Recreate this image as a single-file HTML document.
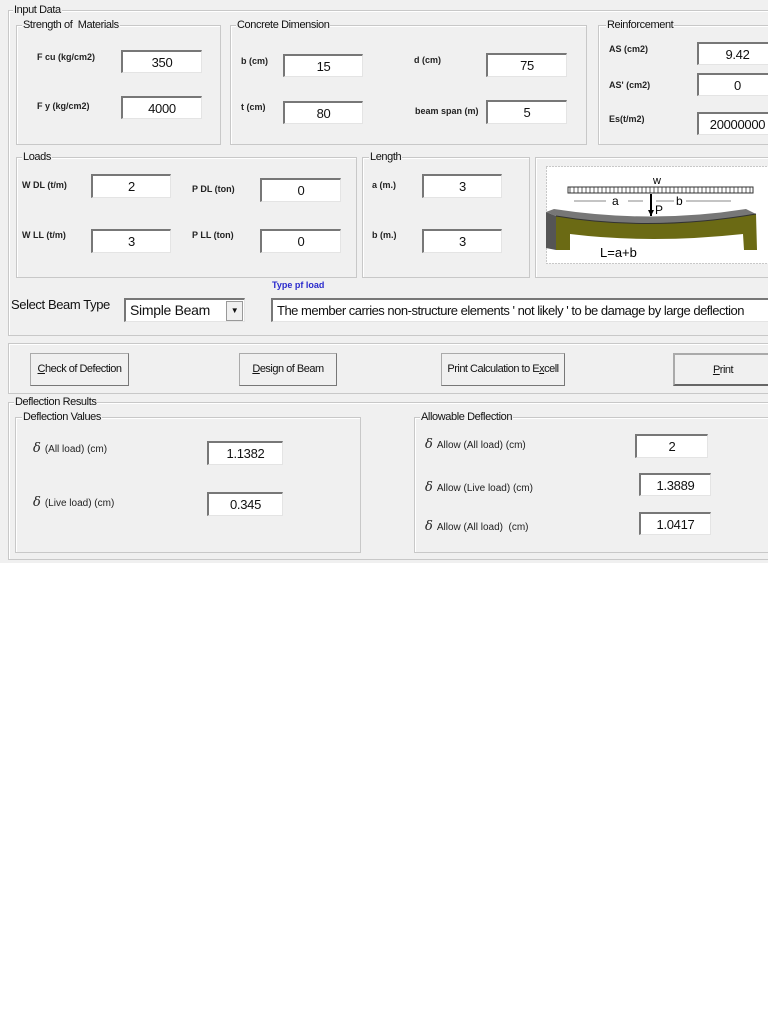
<!DOCTYPE html>
<html><head><style>
body{margin:0;width:768px;height:1024px;background:#fff;position:relative;overflow:hidden;font-family:"Liberation Sans",Arial,sans-serif;}
.bg{position:absolute;left:0;top:0;width:768px;height:563px;background:#f0f0f0;}
.g{position:absolute;border:1px solid #c8c8c8;box-shadow:1px 1px 0 #fff inset;}
.t{position:absolute;background:#f0f0f0;font-size:11px;color:#111;padding:0 1px;line-height:12px;letter-spacing:-0.4px;}
.l{position:absolute;font-size:9px;font-weight:bold;color:#222;white-space:nowrap;}
.i{position:absolute;background:#fff;border-top:2px solid #777;border-left:2px solid #777;border-right:1px solid #e4e4e4;border-bottom:1px solid #e4e4e4;box-sizing:border-box;font-size:13px;text-align:center;color:#111;line-height:21px;letter-spacing:-0.3px;}
.b{position:absolute;background:#f0f0f0;border:1px solid #aaa;border-right-color:#777;border-bottom-color:#777;box-sizing:border-box;font-size:11px;text-align:center;letter-spacing:-0.5px;color:#111;}
.d{position:absolute;font-size:10px;color:#222;white-space:nowrap;}
.d i{font-family:"DejaVu Serif",serif;font-size:13px;margin-right:4px;}
</style></head><body>
<div class="bg"></div>
<div class="g" style="left:8px;top:10px;width:770px;height:324px"></div><div class="t" style="left:13px;top:4px">Input Data</div>
<div class="g" style="left:16px;top:25px;width:203px;height:118px"></div><div class="t" style="left:22px;top:19px">Strength of&nbsp; Materials</div>
<div class="g" style="left:230px;top:25px;width:355px;height:118px"></div><div class="t" style="left:236px;top:19px">Concrete Dimension</div>
<div class="g" style="left:598px;top:25px;width:180px;height:118px"></div><div class="t" style="left:606px;top:19px">Reinforcement</div>
<div class="g" style="left:16px;top:157px;width:339px;height:119px"></div><div class="t" style="left:22px;top:151px">Loads</div>
<div class="g" style="left:362px;top:157px;width:166px;height:119px"></div><div class="t" style="left:369px;top:151px">Length</div>
<div class="g" style="left:535px;top:157px;width:240px;height:119px"></div>

<div class="l" style="left:37px;top:52px">F cu (kg/cm2)</div><div class="i" style="left:121px;top:50px;width:81px;height:23px">350</div>
<div class="l" style="left:37px;top:101px">F y (kg/cm2)</div><div class="i" style="left:121px;top:96px;width:81px;height:23px">4000</div>
<div class="l" style="left:241px;top:56px">b (cm)</div><div class="i" style="left:283px;top:54px;width:80px;height:23px">15</div>
<div class="l" style="left:241px;top:102px">t (cm)</div><div class="i" style="left:283px;top:101px;width:80px;height:23px">80</div>
<div class="l" style="left:414px;top:55px">d (cm)</div><div class="i" style="left:486px;top:53px;width:81px;height:24px">75</div>
<div class="l" style="left:415px;top:106px">beam span (m)</div><div class="i" style="left:486px;top:100px;width:81px;height:24px">5</div>
<div class="l" style="left:609px;top:44px">AS (cm2)</div><div class="i" style="left:697px;top:42px;width:80px;height:23px">9.42</div>
<div class="l" style="left:609px;top:80px">AS' (cm2)</div><div class="i" style="left:697px;top:73px;width:80px;height:23px">0</div>
<div class="l" style="left:609px;top:114px">Es(t/m2)</div><div class="i" style="left:697px;top:112px;width:80px;height:23px">20000000</div>

<div class="l" style="left:22px;top:180px">W DL (t/m)</div><div class="i" style="left:91px;top:174px;width:80px;height:24px">2</div>
<div class="l" style="left:192px;top:184px">P DL (ton)</div><div class="i" style="left:260px;top:178px;width:81px;height:24px">0</div>
<div class="l" style="left:22px;top:230px">W LL (t/m)</div><div class="i" style="left:91px;top:229px;width:80px;height:24px">3</div>
<div class="l" style="left:192px;top:230px">P LL (ton)</div><div class="i" style="left:260px;top:229px;width:81px;height:24px">0</div>
<div class="l" style="left:372px;top:180px">a (m.)</div><div class="i" style="left:422px;top:174px;width:80px;height:24px">3</div>
<div class="l" style="left:372px;top:230px">b (m.)</div><div class="i" style="left:422px;top:229px;width:80px;height:24px">3</div>

<svg style="position:absolute;left:546px;top:166px" width="222" height="98" viewBox="0 0 222 98">
<rect x="0.5" y="0.5" width="240" height="97" fill="#fff" stroke="#999" stroke-dasharray="1,2"/>
<text x="111" y="18" font-size="11" font-family="Liberation Sans" text-anchor="middle">w</text>
<rect x="22" y="21" width="185" height="6" fill="none" stroke="#333" stroke-width="1"/>
<path d="M24 21v6M28 21v6M32 21v6M36 21v6M40 21v6M44 21v6M48 21v6M52 21v6M56 21v6M60 21v6M64 21v6M68 21v6M72 21v6M76 21v6M80 21v6M84 21v6M88 21v6M92 21v6M96 21v6M100 21v6M104 21v6M108 21v6M112 21v6M116 21v6M120 21v6M124 21v6M128 21v6M132 21v6M136 21v6M140 21v6M144 21v6M148 21v6M152 21v6M156 21v6M160 21v6M164 21v6M168 21v6M172 21v6M176 21v6M180 21v6M184 21v6M188 21v6M192 21v6M196 21v6M200 21v6M204 21v6" stroke="#333" stroke-width="0.8"/>
<path d="M28 35H60M82 35H97M110 35H128M140 35H185" stroke="#888"/>
<text x="66" y="39" font-size="12" font-family="Liberation Sans">a</text>
<text x="130" y="39" font-size="12" font-family="Liberation Sans">b</text>
<path d="M105 28V50" stroke="#000" stroke-width="2"/><path d="M102 44L105 50L108 44Z"/>
<text x="109" y="48" font-size="12" font-family="Liberation Sans">P</text>
<path d="M0 46L8 43Q105 58 200 43L210 48Q105 66 10 50Z" fill="#777"/>
<path d="M0 46L10 50L10 84L0 82Z" fill="#555"/>
<path d="M10 50Q105 66 210 48L211 84H198L197 68Q105 78 24 68L24 84H10Z" fill="#6b6a14"/>
<path d="M10 50Q105 66 210 48" stroke="#333" fill="none"/>
<text x="54" y="91" font-size="13" font-family="Liberation Sans">L=a+b</text>
</svg>

<div style="position:absolute;left:272px;top:280px;font-size:9px;font-weight:bold;color:#2a2acc">Type pf load</div>
<div style="position:absolute;left:11px;top:297px;font-size:13px;color:#111;letter-spacing:-0.4px">Select Beam Type</div>
<div class="i" style="left:124px;top:298px;width:121px;height:24px;text-align:left;padding-left:4px;font-size:14px">Simple Beam<span style="position:absolute;right:1px;top:1px;width:15px;height:18px;background:#f0f0f0;border:1px solid #999;font-size:8px;line-height:18px;text-align:center">▼</span></div>
<div class="i" style="left:271px;top:298px;width:510px;height:24px;text-align:left;padding-left:4px;font-size:13px;letter-spacing:-0.5px">The member carries non-structure elements ' not likely ' to be damage by large deflection</div>

<div class="g" style="left:8px;top:343px;width:770px;height:49px"></div>
<div class="b" style="left:30px;top:353px;width:99px;height:33px;line-height:31px"><u>C</u>heck of Defection</div>
<div class="b" style="left:239px;top:353px;width:98px;height:33px;line-height:31px"><u>D</u>esign of Beam</div>
<div class="b" style="left:441px;top:353px;width:124px;height:33px;line-height:31px">Print Calculation to E<u>x</u>cell</div>
<div class="b" style="left:673px;top:353px;width:100px;height:33px;line-height:30px;border:2px solid #666;border-top-color:#aaa;border-left-color:#aaa"><u>P</u>rint</div>

<div class="g" style="left:8px;top:402px;width:770px;height:156px"></div><div class="t" style="left:14px;top:396px">Deflection Results</div>
<div class="g" style="left:15px;top:417px;width:344px;height:134px"></div><div class="t" style="left:22px;top:411px">Deflection Values</div>
<div class="g" style="left:414px;top:417px;width:360px;height:134px"></div><div class="t" style="left:420px;top:411px">Allowable Deflection</div>

<div class="d" style="left:33px;top:441px"><i>δ</i>(All load) (cm)</div><div class="i" style="left:207px;top:441px;width:76px;height:24px">1.1382</div>
<div class="d" style="left:33px;top:495px"><i>δ</i>(Live load) (cm)</div><div class="i" style="left:207px;top:492px;width:76px;height:24px">0.345</div>
<div class="d" style="left:425px;top:437px"><i>δ</i>Allow (All load) (cm)</div><div class="i" style="left:635px;top:434px;width:73px;height:24px">2</div>
<div class="d" style="left:425px;top:480px"><i>δ</i>Allow (Live load) (cm)</div><div class="i" style="left:639px;top:473px;width:72px;height:23px">1.3889</div>
<div class="d" style="left:425px;top:519px"><i>δ</i>Allow (All load)&nbsp; (cm)</div><div class="i" style="left:639px;top:512px;width:72px;height:23px">1.0417</div>
</body></html>
